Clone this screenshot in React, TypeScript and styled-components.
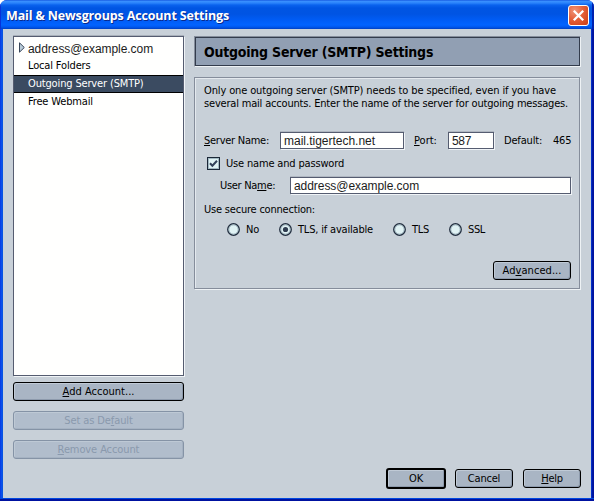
import React from 'react';
import styled, { createGlobalStyle, css } from 'styled-components';

const GlobalStyle = createGlobalStyle`
  * { box-sizing: border-box; }
  body { margin: 0; background: #fff; }
  u { text-underline-offset: 1px; text-decoration-thickness: 1px; text-decoration-skip-ink: none; }
`;

const uiFont = '"DejaVu Sans Condensed", "DejaVu Sans", sans-serif';
const fieldFont = '"Liberation Sans", Arial, sans-serif';

const Window = styled.div`
  width: 594px;
  height: 501px;
  display: flex;
  flex-direction: column;
  overflow: hidden;
  border-radius: 7px 7px 0 0;
  background: #0831d9;
  font: 11px/14px ${uiFont};
  color: #000;
`;

const TitleBar = styled.header`
  height: 29px;
  flex: none;
  display: flex;
  align-items: flex-start;
  justify-content: space-between;
  padding: 5px 5px 0 6px;
  background: linear-gradient(180deg, #0a48d8 0, #3c92ff 1px, #2a83fb 3px, #0a62ee 5px, #0055e3 8px, #0054e3 14px, #005cf5 20px, #0263ff 25px, #0058ee 27px, #003fc4 29px);
  box-shadow: inset 1px 0 #0831d9, inset -2px 0 #0021b0;
`;

const Title = styled.h1`
  margin: 2px 0 0;
  font: bold 12.5px/18px "Open Sans", sans-serif;
  letter-spacing: -0.15px;
  color: #fff;
  text-shadow: 1px 1px #0a2a8c;
  white-space: nowrap;
`;

const CloseButton = styled.button`
  width: 21px;
  height: 21px;
  padding: 0;
  border: 1px solid #fff;
  border-radius: 3px;
  background: radial-gradient(circle at 30% 25%, #f09478 0, #e4603a 45%, #cc3c12 100%);
  svg { display: block; margin: 0 auto; }
`;

const Frame = styled.div`
  flex: 1;
  min-height: 0;
  padding: 0 3px 3px;
  background: linear-gradient(90deg, #0831d9 0, #0a4df0 1px, #0855dd 3px, #0855dd 50%, #0048e8 calc(100% - 3px), #0018a8 calc(100% - 2px), #00109a 100%);
  box-shadow: inset 0 -2px #0012a0, inset 0 -3px #0048e0;
`;

const Client = styled.main`
  height: 100%;
  background: #c8d0d8;
  padding: 7px 10px 0 10px;
  display: flex;
  flex-direction: column;
`;

const Columns = styled.div`
  display: flex;
  height: 424px;
  gap: 10px;
`;

const Sidebar = styled.nav`
  width: 171px;
  flex: none;
  display: flex;
  flex-direction: column;
`;

const AccountList = styled.ul`
  list-style: none;
  margin: 0 0 6px;
  padding: 2px 0 0;
  height: 340px;
  background: #fffffe;
  border: 1px solid #555c70;
  box-shadow: 1px 1px #f0f4f7, 0 -1px #a8afb9;
`;

const Account = styled.li<{ $selected?: boolean; $external?: boolean }>`
  display: flex;
  align-items: center;
  height: 18px;
  padding-left: 4px;
  letter-spacing: -0.15px;
  white-space: nowrap;
  border: solid transparent;
  border-width: 1px 0;
  ${p => p.$selected && css`background: #3b4b61; border-color: #000; color: #fff;`}
  ${p => p.$external && css`font: 12px/14px ${fieldFont}; letter-spacing: -0.06px; padding-top: 2px; color: #1c1c1c;`}
`;

const Twisty = styled.span`
  width: 10px;
  height: 14px;
  flex: none;
  svg { display: block; }
`;

const Button = styled.button<{ $default?: boolean; $width?: number; $ls?: number }>`
  width: ${p => (p.$width ? `${p.$width}px` : '100%')};
  height: ${p => (p.$default ? 21 : 19)}px;
  padding: 1px 0 0;
  border: ${p => (p.$default ? 2 : 1)}px solid #000;
  border-radius: 3px;
  background: #a9b5c4;
  box-shadow: inset 1px 1px #c0cad6, inset -1px -1px #8d9aac;
  color: #000;
  font: 11px/14px ${uiFont};
  letter-spacing: ${p => p.$ls ?? -0.1}px;
  display: flex;
  align-items: center;
  justify-content: center;
  white-space: nowrap;
  &:disabled {
    border-color: #8593a6;
    background: #b1bdcc;
    box-shadow: inset 1px 1px #bec9d5, inset -1px -1px #a5b2c2;
    color: #8a99ad;
  }
`;

const SidebarButtons = styled.div`
  display: flex;
  flex-direction: column;
  gap: 10px;
`;

const Pane = styled.section`
  width: 387px;
  flex: none;
`;

const PaneHeader = styled.div`
  height: 31px;
  border: 1px solid;
  border-color: #858d9b #eef2f5 #eef2f5 #858d9b;
`;

const PaneTitle = styled.h2`
  margin: 0;
  height: 29px;
  padding-left: 8px;
  border: 1px solid #333c4c;
  background: #919fb3;
  font: bold 14px/28px ${uiFont};
  letter-spacing: -0.22px;
`;

const Group = styled.div`
  margin-top: 10px;
  height: 212px;
  border: 1px solid #858d9b;
  box-shadow: 1px 1px #eef2f5, inset 1px 1px #e4e9ee;
  width: 386px;
  padding: 6px 8px 0 9px;
`;

const Description = styled.p`
  margin: 0 0 22px;
  line-height: 13px;
  white-space: nowrap;
`;

const DescriptionLine = styled.span<{ $ls: number }>`
  display: block;
  letter-spacing: ${p => p.$ls}px;
`;

const FormRow = styled.div<{ $height: number; $gap?: number; $indent?: number }>`
  display: flex;
  align-items: center;
  height: ${p => p.$height}px;
  margin-top: ${p => p.$gap ?? 0}px;
  padding-left: ${p => p.$indent ?? 0}px;
`;

const Label = styled.label<{ $width?: number; $indent?: number; $ls?: number }>`
  width: ${p => (p.$width ? `${p.$width}px` : 'auto')};
  padding-left: ${p => p.$indent ?? 0}px;
  flex: none;
  letter-spacing: ${p => p.$ls ?? -0.18}px;
  white-space: nowrap;
`;

const Input = styled.input<{ $width: number; $ls?: number }>`
  width: ${p => p.$width}px;
  height: 17px;
  flex: none;
  margin: 0;
  padding: 1px 3px 0;
  border: 1px solid #555c70;
  border-radius: 0;
  outline: 0;
  background: #fffffe;
  box-shadow: 1px 1px #f0f4f7, 0 -1px #b0b7c1;
  color: #1c1c1c;
  font: 12px/14px ${fieldFont};
  letter-spacing: ${p => p.$ls ?? -0.06}px;
`;

const CheckBox = styled.span`
  width: 13px;
  height: 13px;
  margin-right: 6px;
  svg { display: block; }
`;

const Choice = styled.label<{ $width: number; $ls: number }>`
  width: ${p => p.$width}px;
  display: flex;
  align-items: center;
  gap: 6px;
  white-space: nowrap;
  letter-spacing: ${p => p.$ls}px;
  svg { flex: none; }
`;

const GroupActions = styled.div`
  display: flex;
  justify-content: flex-end;
  margin-top: 25px;
`;

const Footer = styled.footer`
  display: flex;
  align-items: center;
  justify-content: flex-end;
  gap: 10px;
  height: 21px;
  margin-top: 8px;
  ${Button}:first-child { margin-right: -1px; }
`;

function Radio({ checked }: { checked?: boolean }) {
  return (
    <svg width="13" height="13" viewBox="0 0 13 13">
      <circle cx="6.5" cy="6.5" r="5.7" fill="#e0f2f4" stroke="#232f40" strokeWidth="1.5" />
      <circle cx="6.5" cy="6.5" r="4.6" fill="none" stroke="#a3b9c3" strokeWidth="1" />
      {checked && <circle cx="6.5" cy="6.5" r="2.6" fill="#2f3c50" />}
    </svg>
  );
}

export default function App() {
  return (
    <>
      <GlobalStyle />
      <Window>
        <TitleBar>
          <Title>Mail &amp; Newsgroups Account Settings</Title>
          <CloseButton aria-label="Close">
            <svg width="19" height="19" viewBox="0 0 19 19">
              <path d="M4.8 4.8L14.2 14.2M14.2 4.8L4.8 14.2" stroke="#fff" strokeWidth="2.3" />
            </svg>
          </CloseButton>
        </TitleBar>
        <Frame>
          <Client>
            <Columns>
              <Sidebar>
                <AccountList>
                  <Account $external>
                    <Twisty>
                      <svg width="10" height="14" viewBox="0 0 10 14">
                        <path d="M1.5 0.8V10.2L6.3 5.5Z" fill="#b9cbd8" stroke="#39465a" />
                      </svg>
                    </Twisty>
                    address@example.com
                  </Account>
                  <Account><Twisty />Local Folders</Account>
                  <Account $selected><Twisty />Outgoing Server (SMTP)</Account>
                  <Account><Twisty />Free Webmail</Account>
                </AccountList>
                <SidebarButtons>
                  <Button $ls={0.02}><span><u>A</u>dd Account...</span></Button>
                  <Button disabled><span>Set as De<u>f</u>ault</span></Button>
                  <Button disabled><span><u>R</u>emove Account</span></Button>
                </SidebarButtons>
              </Sidebar>
              <Pane>
                <PaneHeader>
                  <PaneTitle>Outgoing Server (SMTP) Settings</PaneTitle>
                </PaneHeader>
                <Group>
                  <Description>
                    <DescriptionLine $ls={-0.13}>Only one outgoing server (SMTP) needs to be specified, even if you have</DescriptionLine>
                    <DescriptionLine $ls={-0.186}>several mail accounts. Enter the name of the server for outgoing messages.</DescriptionLine>
                  </Description>
                  <FormRow $height={17}>
                    <Label $width={76} $ls={-0.26}><u>S</u>erver Name:</Label>
                    <Input $width={124} defaultValue="mail.tigertech.net" $ls={-0.02} />
                    <Label $width={44} $indent={10} $ls={0}><u>P</u>ort:</Label>
                    <Input $width={46} defaultValue="587" $ls={-0.3} />
                    <Label $width={59} $indent={10}>Default:</Label>
                    <Label $ls={-0.2}>465</Label>
                  </FormRow>
                  <FormRow $height={13} $gap={8} $indent={3}>
                    <CheckBox>
                      <svg width="13" height="13" viewBox="0 0 13 13">
                        <rect x="0.5" y="0.5" width="12" height="12" fill="#e0f2f4" stroke="#1c2838" />
                        <rect x="1.5" y="1.5" width="10" height="10" fill="none" stroke="#a3b9c3" />
                        <path d="M3 6.2L5.4 8.8L10 3.8" fill="none" stroke="#33425a" strokeWidth="2" />
                      </svg>
                    </CheckBox>
                    <Label $ls={-0.17}>Use name and password</Label>
                  </FormRow>
                  <FormRow $height={17} $gap={7} $indent={16}>
                    <Label $width={70} $ls={-0.3}>User Na<u>m</u>e:</Label>
                    <Input $width={281} defaultValue="address@example.com" />
                  </FormRow>
                  <FormRow $height={14} $gap={9}>
                    <Label $ls={-0.206}>Use secure connection:</Label>
                  </FormRow>
                  <FormRow $height={13} $gap={6} $indent={23}>
                    <Choice $width={52} $ls={-0.23}><Radio />No</Choice>
                    <Choice $width={114} $ls={-0.187}><Radio checked />TLS, if available</Choice>
                    <Choice $width={56} $ls={-0.28}><Radio />TLS</Choice>
                    <Choice $width={50} $ls={-0.36}><Radio />SSL</Choice>
                  </FormRow>
                  <GroupActions>
                    <Button $width={78} $ls={0.06}><span>Ad<u>v</u>anced...</span></Button>
                  </GroupActions>
                </Group>
              </Pane>
            </Columns>
            <Footer>
              <Button $default $width={60}>OK</Button>
              <Button $width={58} $ls={-0.2}>Cancel</Button>
              <Button $width={58} $ls={-0.3}><span><u>H</u>elp</span></Button>
            </Footer>
          </Client>
        </Frame>
      </Window>
    </>
  );
}
